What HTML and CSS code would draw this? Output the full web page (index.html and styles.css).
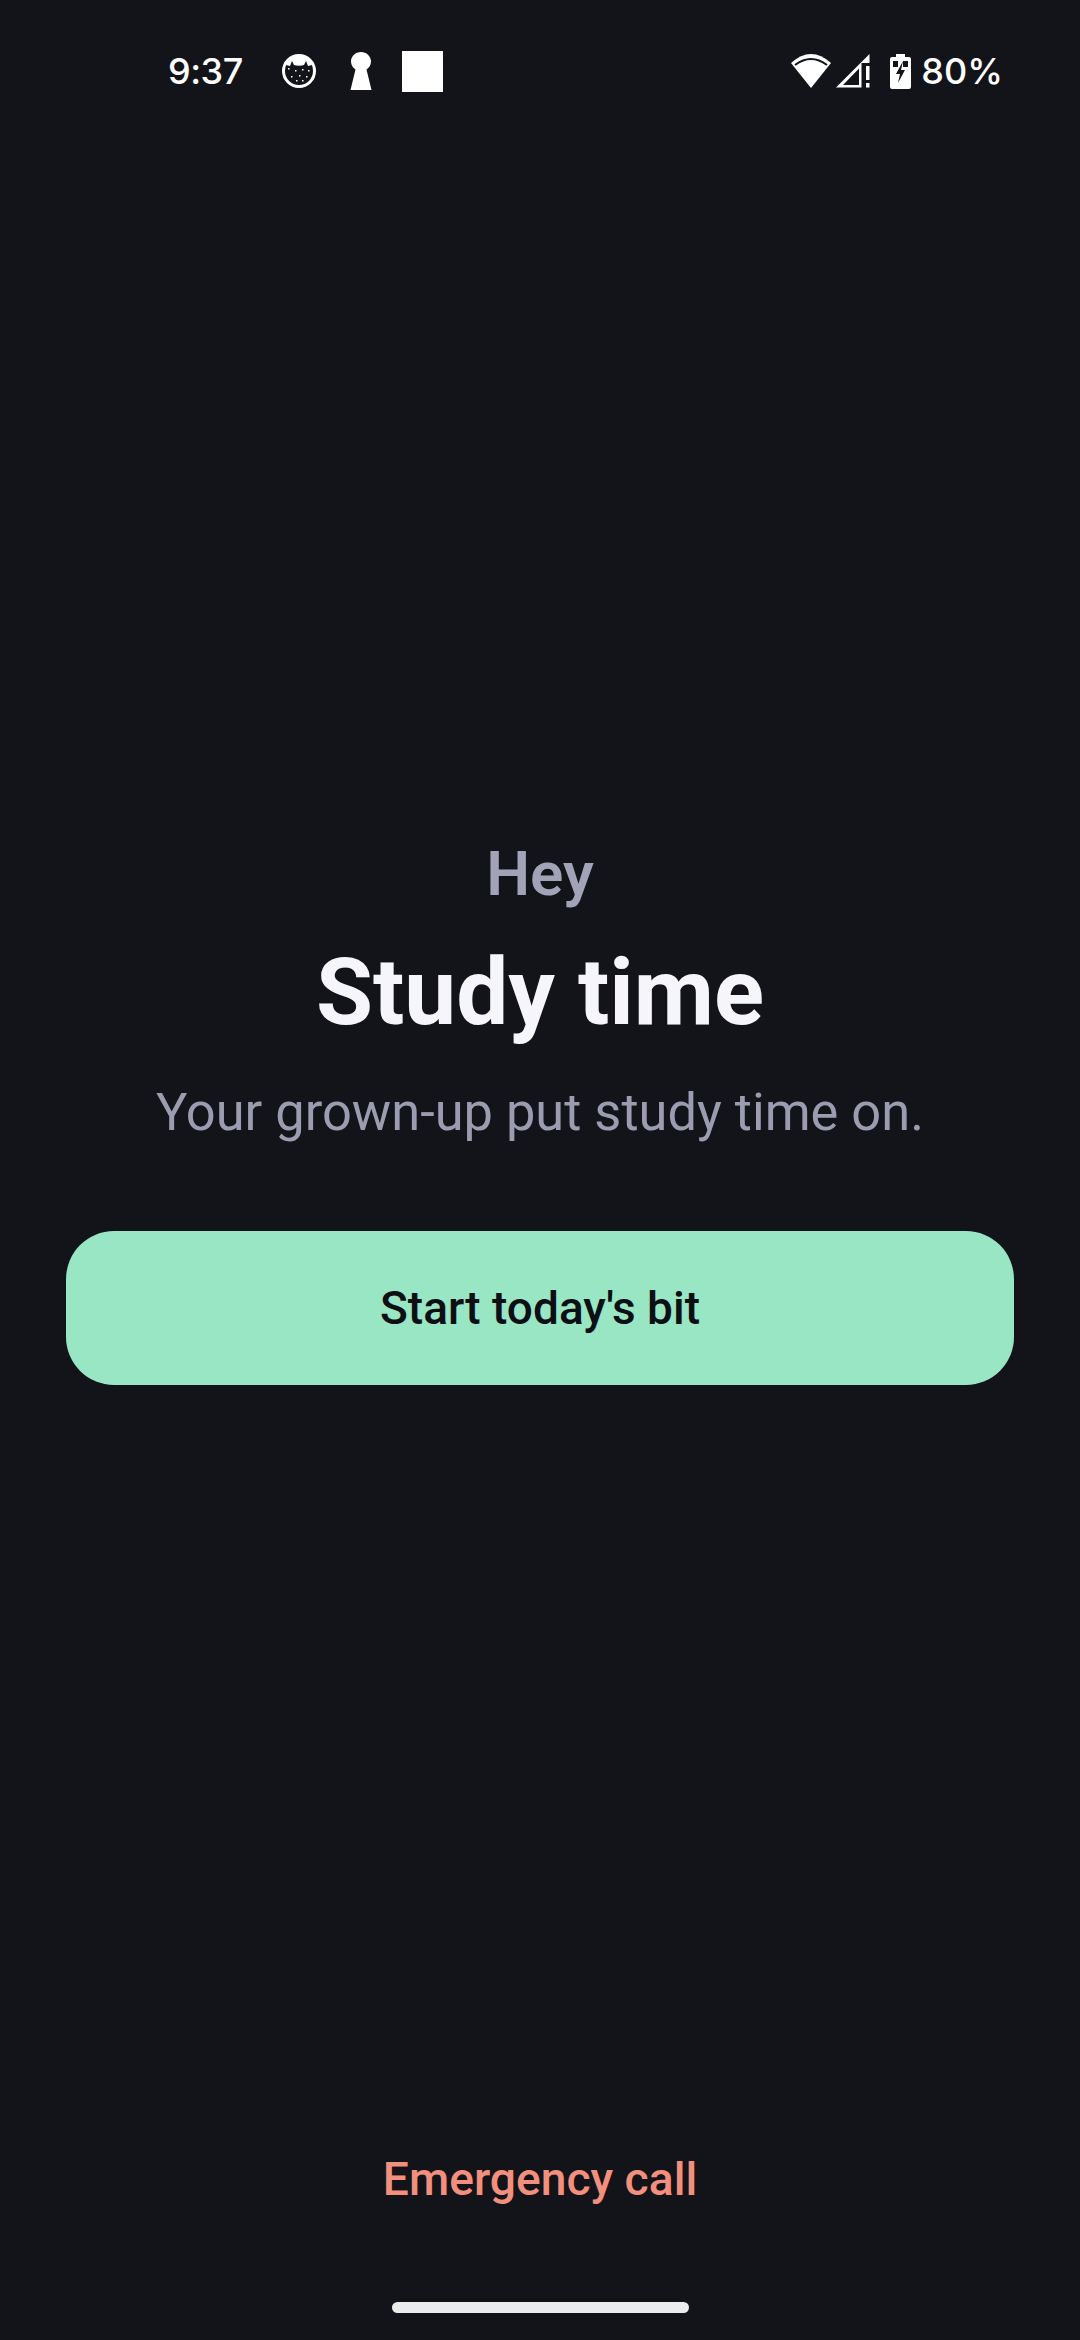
FILE: index.html
```html
<!DOCTYPE html>
<html lang="en">
<head>
    <meta charset="UTF-8">
    <meta name="viewport" content="width=device-width, initial-scale=1.0">
    <title>Study time</title>
    <link rel="stylesheet" href="styles.css">
</head>
<body>
    <div class="screen">
        <div class="status-bar">
            <div class="status-left">
                <span class="clock">9:37</span>
                <svg class="icon-face" viewBox="0 0 36 36">
                    <circle cx="18" cy="18" r="15.5" fill="#12141a" stroke="#fff" stroke-width="3"/>
                    <path d="M5 12 C7 6 12 3 18 3 C24 3 29 6 31 12 L27 13 L25 8 L23 12 C20 13 16 13 13 12 L11 8 L9 13 Z" fill="#fff"/>
                    <g fill="#fff">
                        <rect x="7" y="15" width="1.5" height="1.5"/>
                        <rect x="14" y="17" width="1.5" height="1.5"/>
                        <rect x="21" y="16" width="1.5" height="1.5"/>
                        <rect x="27" y="17" width="1.5" height="1.5"/>
                        <rect x="10" y="23" width="1.5" height="1.5"/>
                        <rect x="18" y="22" width="1.5" height="1.5"/>
                        <rect x="25" y="23" width="1.5" height="1.5"/>
                        <rect x="15" y="27" width="1.5" height="1.5"/>
                        <rect x="21" y="27" width="1.5" height="1.5"/>
                    </g>
                </svg>
                <svg class="icon-key" viewBox="0 0 22 38">
                    <path d="M11 0 C16.500 0 21 4.200 21 9.500 C21 13 19 15.800 16.500 17.500 L21.500 38 L0.500 38 L5.500 17.500 C3 15.800 1 13 1 9.500 C1 4.200 5.500 0 11 0 Z" fill="#fff"/>
                </svg>
                <div class="icon-square"></div>
            </div>
            <div class="status-right">
                <svg class="icon-wifi" viewBox="0 0 40 34">
                    <path d="M0 9 Q20 -9 40 9 L20 34 Z" fill="#fff"/>
                    <path d="M4 11 Q20 -1 36 11" fill="none" stroke="#12141a" stroke-width="2"/>
                </svg>
                <svg class="icon-signal" viewBox="0 0 34 34">
                    <path fill-rule="evenodd" d="M0 33.500 L33.500 0 V9 H25.500 V33.500 Z M7 31 H23 V14.500 Z" fill="#fff"/>
                    <rect x="30" y="12" width="3.500" height="14" fill="#fff"/>
                    <rect x="30" y="29" width="3.500" height="4.500" fill="#fff"/>
                </svg>
                <svg class="icon-battery" viewBox="0 0 21 35">
                    <path d="M6 0 H15 V3 H19 A2 2 0 0 1 21 5 V33 A2 2 0 0 1 19 35 H2 A2 2 0 0 1 0 33 V5 A2 2 0 0 1 2 3 H6 Z" fill="#fff"/>
                    <rect x="3" y="7" width="5" height="6" fill="#12141a"/>
                    <rect x="13" y="7" width="5" height="6" fill="#12141a"/>
                    <path d="M13 7 L6 20 H10 L8 29 L15 16 H11 Z" fill="#12141a"/>
                </svg>
                <span class="battery-level">80%</span>
            </div>
        </div>

        <div class="content">
            <p class="greeting">Hey</p>
            <h1 class="title">Study time</h1>
            <p class="subtitle">Your grown-up put study time on.</p>
            <button class="start-btn">Start today's bit</button>
        </div>

        <div class="footer">
            <a class="emergency">Emergency call</a>
            <div class="home-bar"></div>
        </div>
    </div>
</body>
</html>
```

FILE: styles.css
```css
body {
    margin: 0;
    padding: 0;
    background-color: #12141a;
    font-family: Roboto, "Noto Sans", sans-serif;
}
.screen {
    display: flex;
    flex-direction: column;
    height: 2340px;
    overflow: hidden;
}

/* Barra de status */
.status-bar {
    display: flex;
    justify-content: space-between;
    align-items: center;
    height: 42px;
    padding: 50px 77px 0 168px;
    color: #fff;
}
.status-left, .status-right {
    display: flex;
    align-items: center;
}
.clock {
    font-family: Inter, Roboto, sans-serif;
    font-size: 36px;
    font-weight: 500;
    letter-spacing: -0.5px;
    width: 73px;
}
.battery-level {
    font-family: Inter, Roboto, sans-serif;
    font-size: 36px;
    font-weight: 500;
    margin-left: 10px;
}
.icon-face {
    width: 36px;
    height: 36px;
    margin-left: 40px;
}
.icon-key {
    width: 22px;
    height: 38px;
    margin-left: 33px;
}
.icon-square {
    width: 41px;
    height: 41px;
    margin-left: 30px;
    background-color: #fff;
}
.icon-wifi {
    width: 40px;
    height: 34px;
}
.icon-signal {
    width: 34px;
    height: 34px;
    margin-left: 5px;
}
.icon-battery {
    width: 21px;
    height: 35px;
    margin-left: 20px;
}

/* Conteudo central */
.content {
    display: flex;
    flex-direction: column;
    align-items: center;
    padding: 749px 66px 0;
    flex: 1;
}
.greeting {
    margin: 0;
    font-size: 62px;
    line-height: 66px;
    font-weight: 600;
    color: #a3a3b8;
}
.title {
    margin: 34px 0 0;
    font-size: 92.6px;
    line-height: 104px;
    font-weight: 700;
    color: #f5f5fa;
}
.subtitle {
    margin: 34px 0 0;
    font-size: 52.4px;
    line-height: 66px;
    font-weight: 400;
    color: #9c9cb0;
}
.start-btn {
    width: 100%;
    height: 154px;
    margin-top: 86px;
    border: none;
    border-radius: 48px;
    background-color: #98e6c3;
    color: #0c0f14;
    font-family: inherit;
    font-size: 46px;
    font-weight: 500;
}

/* Rodape */
.footer {
    display: flex;
    flex-direction: column;
    align-items: center;
    padding-bottom: 27px;
}
.emergency {
    font-size: 46.2px;
    line-height: 56px;
    font-weight: 500;
    color: #f28f7d;
}
.home-bar {
    width: 297px;
    height: 11px;
    margin-top: 95px;
    border-radius: 6px;
    background-color: #ececec;
}
```
